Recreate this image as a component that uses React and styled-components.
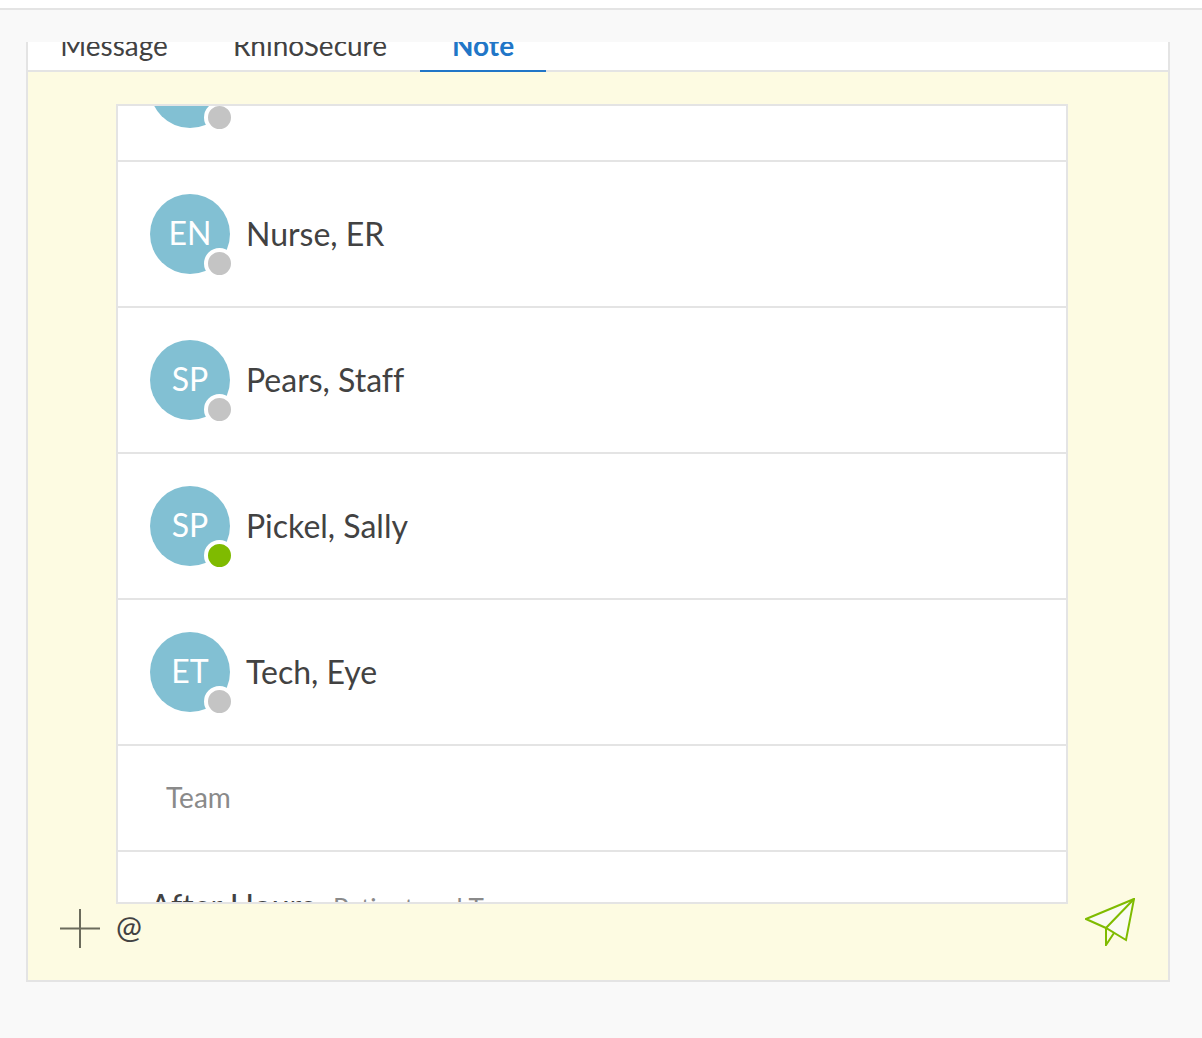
import React from "react";
import styled, { createGlobalStyle } from "styled-components";

const GlobalStyle = createGlobalStyle`
  html, body {
    margin: 0;
    padding: 0;
    background: #f9f9f9;
    font-family: Lato, "Liberation Sans", sans-serif;
    font-variant-ligatures: none;
  }
`;

const members = [
  { id: 1, initials: "", name: "", online: false },
  { id: 2, initials: "EN", name: "Nurse, ER", online: false },
  { id: 3, initials: "SP", name: "Pears, Staff", online: false },
  { id: 4, initials: "SP", name: "Pickel, Sally", online: true },
  { id: 5, initials: "ET", name: "Tech, Eye", online: false },
];

const tabs = [
  { id: "message", label: "Message", width: 172 },
  { id: "secure", label: "RhinoSecure", width: 220 },
  { id: "note", label: "Note", width: 126, active: true },
];

const App = () => {
  return (
    <Page>
      <GlobalStyle />
      <TopStrip />
      <Card>
        <TabBar>
          {tabs.map((tab) => (
            <Tab key={tab.id} $active={tab.active} $width={tab.width}>
              {tab.label}
            </Tab>
          ))}
        </TabBar>
        <Composer>
          <ListBox>
            <ListInner>
              {members.map((member) => (
                <MemberRow key={member.id}>
                  <Avatar>
                    <Initials>{member.initials}</Initials>
                    <StatusDot $online={member.online} />
                  </Avatar>
                  <MemberName>{member.name}</MemberName>
                </MemberRow>
              ))}
              <SectionRow>
                <SectionLabel>Team</SectionLabel>
              </SectionRow>
              <GroupRow>
                <GroupName>After Hours</GroupName>
                <GroupType>Patient and Team</GroupType>
              </GroupRow>
            </ListInner>
          </ListBox>
          <InputRow>
            <PlusIcon width="40" height="39" viewBox="0 0 40 39">
              <path d="M20 0V39M0 19.5H40" stroke="#6b6b5c" strokeWidth="2" fill="none" />
            </PlusIcon>
            <InputText>@</InputText>
            <SendIcon width="50" height="48" viewBox="0 0 50 48">
              <path
                d="M49 1 1 21 21 30 41 42Z"
                fill="#fafbf3"
                stroke="#7fbb00"
                strokeWidth="2"
              />
              <path d="M49 1 21 30V47L29 35" fill="none" stroke="#7fbb00" strokeWidth="2" />
            </SendIcon>
          </InputRow>
        </Composer>
      </Card>
    </Page>
  );
};

export default App;

const Page = styled.div`
  width: 1202px;
  height: 1038px;
  background: #f9f9f9;
  overflow: hidden;
`;

const TopStrip = styled.div`
  height: 8px;
  background: #fff;
  border-bottom: 2px solid #e4e4e4;
  margin-bottom: 32px;
`;

const Card = styled.div`
  width: 1144px;
  height: 940px;
  margin-left: 26px;
  box-sizing: border-box;
  border: 2px solid #e4e4e4;
  border-top: 0;
  display: flex;
  flex-direction: column;
  background: #fdfbe2;
`;

const TabBar = styled.div`
  height: 30px;
  flex: none;
  display: flex;
  background: #fff;
  box-shadow: inset 0 -2px 0 #e4e4e4;
  overflow: hidden;
`;

const Tab = styled.div`
  width: ${(p) => p.$width}px;
  height: 32px;
  flex: none;
  text-align: center;
  font-size: 28px;
  line-height: 10px;
  margin-top: -2px;
  color: ${(p) => (p.$active ? "#2176c7" : "#424242")};
  font-weight: ${(p) => (p.$active ? 700 : 400)};
  box-shadow: ${(p) => (p.$active ? "inset 0 -2px 0 #2176c7" : "none")};
`;

const Composer = styled.div`
  flex: 1;
  display: flex;
  flex-direction: column;
  padding-top: 32px;
  min-height: 0;
`;

const ListBox = styled.div`
  width: 952px;
  height: 800px;
  margin-left: 88px;
  flex: none;
  box-sizing: border-box;
  background: #fff;
  border: 2px solid #e4e4e4;
  overflow: hidden;
`;

const ListInner = styled.div`
  margin-top: -90px;
`;

const MemberRow = styled.div`
  height: 146px;
  box-sizing: border-box;
  display: flex;
  align-items: center;
  padding: 0 32px;
  gap: 16px;
  border-bottom: 2px solid #e4e4e4;
`;

const Avatar = styled.div`
  position: relative;
  width: 80px;
  height: 80px;
  flex: none;
  border-radius: 50%;
  background: #82c0d3;
  display: flex;
  align-items: center;
  justify-content: center;
`;

const Initials = styled.span`
  color: #fff;
  font-size: 32px;
  margin-top: -3px;
`;

const StatusDot = styled.span`
  position: absolute;
  right: -5px;
  bottom: -5px;
  width: 23px;
  height: 23px;
  box-sizing: content-box;
  border: 4px solid #fff;
  border-radius: 50%;
  background: ${(p) => (p.$online ? "#7fbb00" : "#c4c4c4")};
`;

const MemberName = styled.div`
  font-size: 32px;
  color: #424242;
  margin-top: -2px;
`;

const SectionRow = styled.div`
  height: 106px;
  box-sizing: border-box;
  display: flex;
  align-items: center;
  padding-left: 48px;
  border-bottom: 2px solid #e4e4e4;
`;

const SectionLabel = styled.span`
  font-size: 28px;
  color: #8a8a8a;
  margin-top: -2px;
`;

const GroupRow = styled.div`
  height: 106px;
  box-sizing: border-box;
  display: flex;
  align-items: baseline;
  gap: 18px;
  padding: 34px 32px 0;
`;

const GroupName = styled.span`
  font-size: 32px;
  color: #424242;
`;

const GroupType = styled.span`
  font-size: 26px;
  color: #8a8a8a;
`;

const InputRow = styled.div`
  flex: 1;
  display: flex;
  align-items: flex-start;
  padding: 5px 33px 0 32px;
`;

const PlusIcon = styled.svg`
  flex: none;
`;

const InputText = styled.div`
  font-size: 31px;
  line-height: 34px;
  color: #424242;
  margin-left: 16px;
`;

const SendIcon = styled.svg`
  flex: none;
  margin-left: auto;
  margin-top: -11px;
`;
